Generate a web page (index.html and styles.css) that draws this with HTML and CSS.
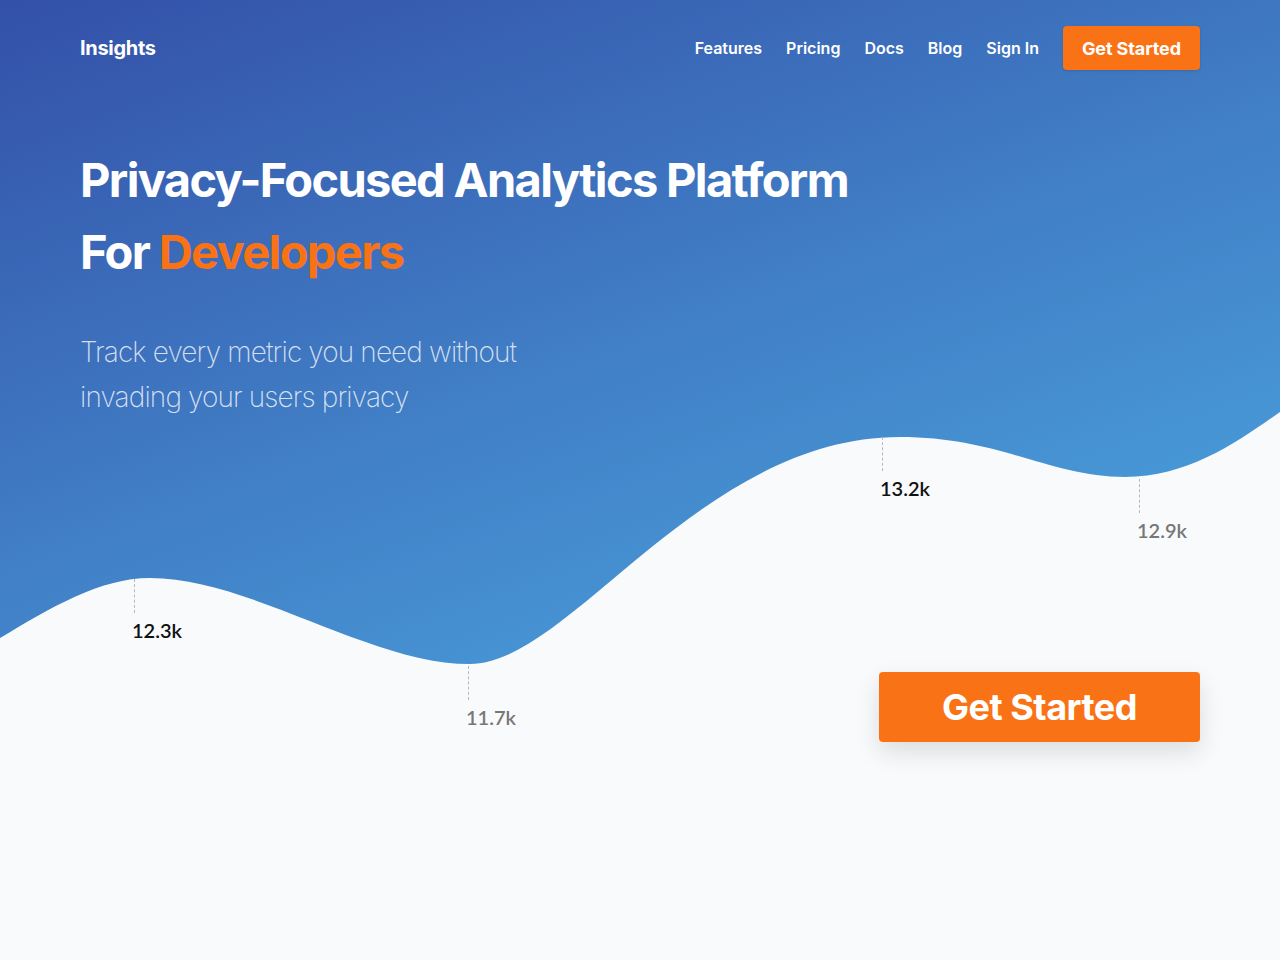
FILE: index.html
```html
<!DOCTYPE html>
<html lang="en">
<head>
<meta charset="utf-8">
<title>Insights</title>
<link rel="stylesheet" href="styles.css">
</head>
<body>
<div class="page">
  <svg class="wave" viewBox="0 0 1280 960" width="1280" height="960" aria-hidden="true">
    <path d="M0,638 C50,608 100,578 150,578 C250,578 370,664 470,664 C570,664 700,437 900,437 C1000,437 1050,477 1125,477 C1190,477 1240,440 1280,412 L1280,960 L0,960 Z" fill="#f8fafc"/>
  </svg>

  <header class="nav">
    <div class="logo">Insights</div>
    <nav class="links">
      <a href="#">Features</a>
      <a href="#">Pricing</a>
      <a href="#">Docs</a>
      <a href="#">Blog</a>
      <a href="#">Sign In</a>
      <a href="#" class="btn-small">Get Started</a>
    </nav>
  </header>

  <section class="hero">
    <h1>Privacy-Focused Analytics Platform<br>For <span class="accent">Developers</span></h1>
    <p class="sub">Track every metric you need without<br>invading your users privacy</p>
  </section>

  <div class="point p1"><span class="tick"></span><span class="val dark">12.3k</span></div>
  <div class="point p2"><span class="tick"></span><span class="val muted">11.7k</span></div>
  <div class="point p3"><span class="tick"></span><span class="val dark">13.2k</span></div>
  <div class="point p4"><span class="tick"></span><span class="val muted">12.9k</span></div>

  <div class="cta-row">
    <a href="#" class="btn-big">Get Started</a>
  </div>
</div>
</body>
</html>
```

FILE: styles.css
```css
* { box-sizing: border-box; }
html, body { margin: 0; padding: 0; }
body { font-family: Inter, "Liberation Sans", sans-serif; }

.page {
  position: relative;
  width: 1280px;
  height: 960px;
  overflow: hidden;
  background: linear-gradient(160deg, #3350a8 0%, #417fc6 40%, #4aa2dc 75%, #4aa6de 100%);
}

.wave {
  position: absolute;
  left: 0;
  top: 0;
  z-index: 0;
}

.nav {
  position: relative;
  z-index: 1;
  display: flex;
  align-items: center;
  justify-content: space-between;
  padding: 26px 80px 0;
  height: 70px;
}

.logo {
  color: #fff;
  font-weight: 700;
  font-size: 20px;
  letter-spacing: -0.3px;
}

.links {
  display: flex;
  align-items: center;
  gap: 24px;
}

.links a {
  color: #fff;
  text-decoration: none;
  font-weight: 600;
  font-size: 16px;
}

.links .btn-small {
  background: #f97316;
  border-radius: 4px;
  height: 44px;
  padding: 0 19px 0 19px;
  display: flex;
  align-items: center;
  font-size: 18px;
  font-weight: 700;
  letter-spacing: -0.1px;
  box-shadow: 0 1px 3px rgba(0,0,0,0.12);
}

.hero {
  position: relative;
  z-index: 1;
  padding: 0 80px;
  margin-top: 74px;
}

.hero h1 {
  margin: 0;
  color: #fff;
  font-size: 47px;
  line-height: 72px;
  font-weight: 700;
  letter-spacing: -1.65px;
}

.accent { color: #f97316; }

.sub {
  margin: 42px 0 0;
  color: rgba(255,255,255,0.78);
  font-size: 28px;
  line-height: 45px;
  font-weight: 200;
  letter-spacing: -0.88px;
}

.point {
  position: absolute;
  z-index: 1;
  display: flex;
  flex-direction: column;
  align-items: flex-start;
}

.tick {
  width: 0;
  height: 34px;
  border-left: 1px dashed #b5bac2;
  margin-left: 2px;
}

.val {
  font-family: Lato, "Liberation Sans", sans-serif;
  font-size: 20px;
  font-weight: 600;
  line-height: 24px;
  margin-top: 5px;
}

.val.dark { color: #111; }
.val.muted { color: #777; }

.p1 { left: 132px; top: 579px; }
.p2 { left: 466px; top: 666px; }
.p3 { left: 880px; top: 437px; }
.p4 { left: 1137px; top: 479px; }

.cta-row {
  position: relative;
  z-index: 1;
  display: flex;
  justify-content: flex-end;
  padding: 0 80px;
  margin-top: 252px;
}

.btn-big {
  width: 321px;
  height: 70px;
  background: #f97316;
  color: #fff;
  text-decoration: none;
  font-size: 36px;
  font-weight: 700;
  letter-spacing: -0.5px;
  border-radius: 4px;
  display: flex;
  align-items: center;
  justify-content: center;
  box-shadow: 0 10px 25px rgba(0,0,0,0.12);
}
```
